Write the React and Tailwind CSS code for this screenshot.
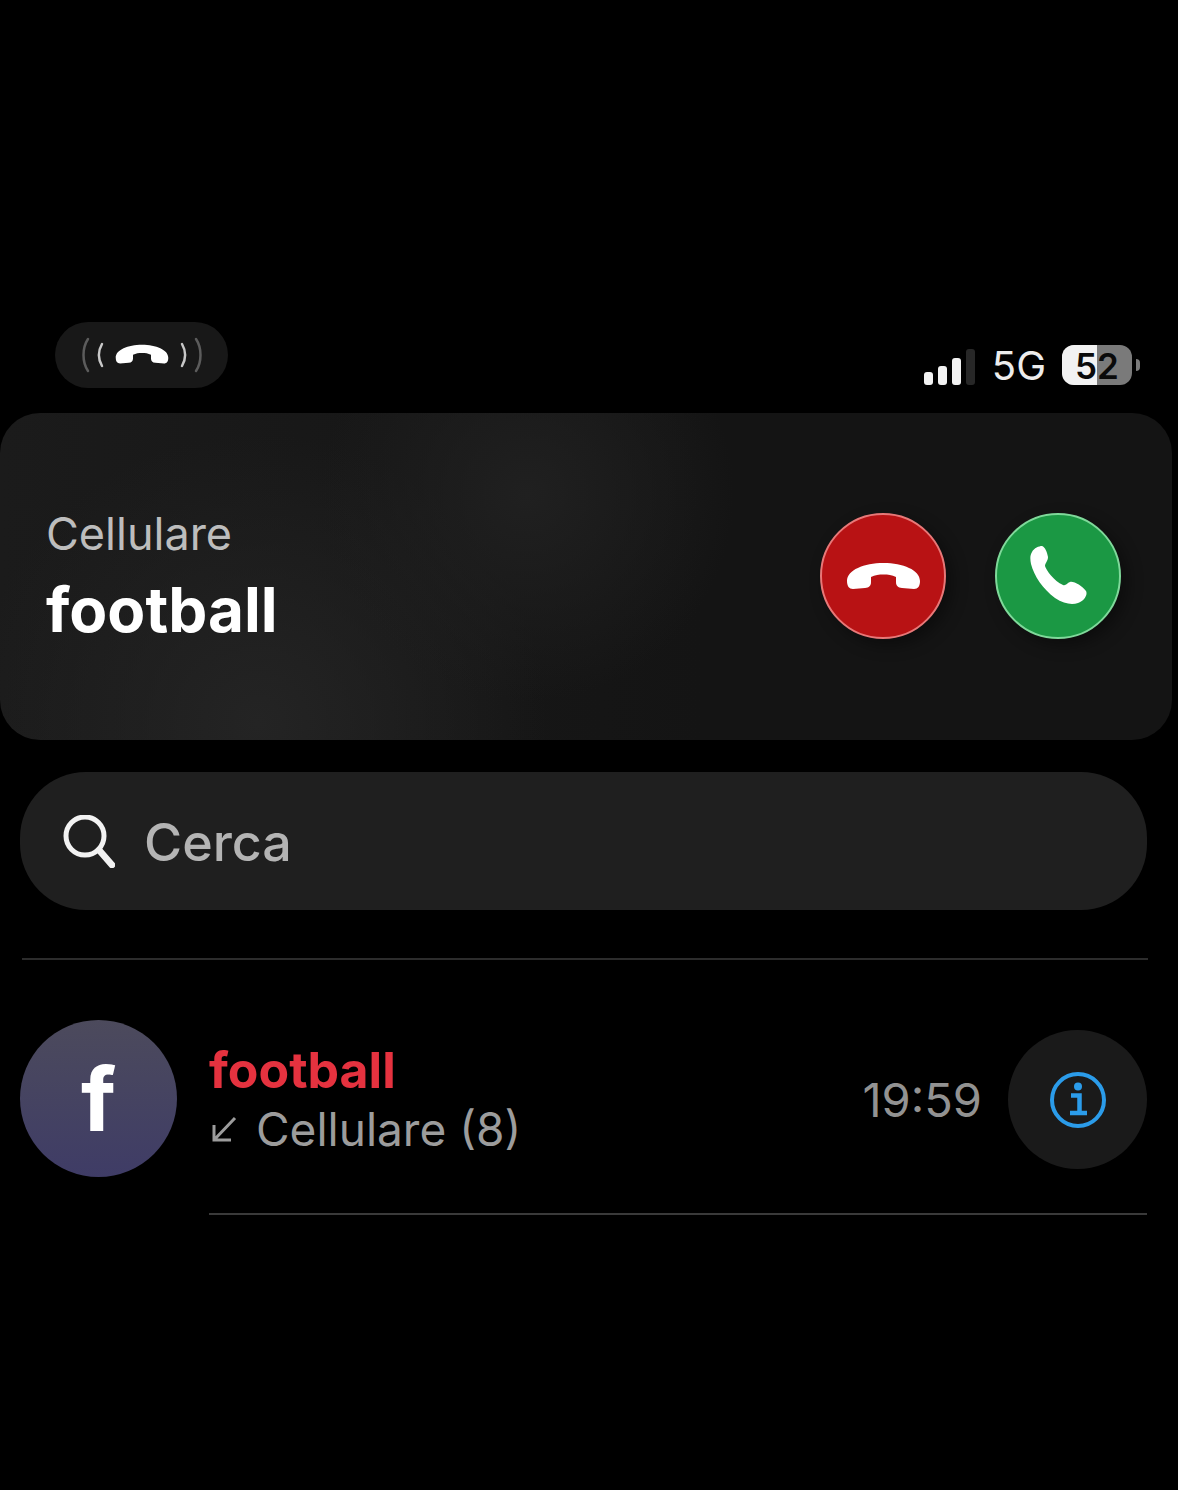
const HangupIcon = ({ className }) => (
    <svg viewBox="0 0 75 28" className={className} fill="currentColor">
        <path d="M1 19C1 8 18 1 37.5 1C57 1 74 8 74 19C74 24 72 27 68 27L56 26C52 25.5 50 24 50 20L50 15C46 13 42 12.5 37.5 12.5C33 12.5 29 13 25 15L25 20C25 24 23 25.5 19 26L7 27C3 27 1 24 1 19Z" />
    </svg>
)

const PhoneIcon = ({ className }) => (
    <svg viewBox="0 0 57 59" className={className} fill="currentColor">
        <path d="M2 6C4 2 9 0 12 0C15 1 17 6 18 11C18 15 15 17 15 20C16 24 24 35 33 39C36 40 37 37 40 36C44 35 52 40 56 45C58 49 54 55 48 57C42 59 34 58 25 52C13 43 4 30 1 18C0 13 0 9 2 6Z" />
    </svg>
)

const RingingPill = () => (
    <div className="flex h-[66px] w-[173px] items-center justify-center rounded-full bg-[#181818]">
        <svg viewBox="0 0 122 36" className="h-[36px] w-[122px]" fill="none" strokeLinecap="round">
            <path d="M7 2C1 11 1 25 7 34" stroke="#5c5c5c" strokeWidth="2.5" />
            <path d="M21 7C17 14 17 22 21 29" stroke="#c8c8c8" strokeWidth="2.5" />
            <g transform="translate(34 7) scale(0.72)">
                <path fill="#ffffff" d="M1 19C1 8 18 1 37.5 1C57 1 74 8 74 19C74 24 72 27 68 27L56 26C52 25.5 50 24 50 20L50 15C46 13 42 12.5 37.5 12.5C33 12.5 29 13 25 15L25 20C25 24 23 25.5 19 26L7 27C3 27 1 24 1 19Z" />
            </g>
            <path d="M101 7C105 14 105 22 101 29" stroke="#c8c8c8" strokeWidth="2.5" />
            <path d="M115 2C121 11 121 25 115 34" stroke="#5c5c5c" strokeWidth="2.5" />
        </svg>
    </div>
)

const StatusIcons = () => (
    <div className="mb-[3px] flex h-[40px] items-center font-['Inter',sans-serif]">
        <div className="flex items-end gap-[5px] self-end">
            <div className="h-[13px] w-[9px] rounded-[3px] bg-[#f2f2f2]"></div>
            <div className="h-[19px] w-[9px] rounded-[3px] bg-[#f2f2f2]"></div>
            <div className="h-[27px] w-[9px] rounded-[3px] bg-[#f2f2f2]"></div>
            <div className="h-[36px] w-[9px] rounded-[3px] bg-[#272727]"></div>
        </div>
        <span className="ml-[17px] pt-[2px] text-[40px] leading-none font-normal text-[#ececec]">5G</span>
        <div className="relative ml-[16px] flex h-[40px] w-[70px] overflow-hidden rounded-[12px] bg-[#7a7a7a]">
            <div className="h-full w-[35px] bg-[#f2f2f2]"></div>
            <span className="absolute inset-0 flex items-center justify-center pt-[2px] text-[35px] leading-none font-semibold text-[#0a0a0a]">52</span>
        </div>
        <div className="ml-[4px] h-[12px] w-[4px] rounded-r-full bg-[#7a7a7a]"></div>
    </div>
)

const CallCard = () => (
    <div className="mt-[25px] mr-[6px] flex h-[327px] items-center justify-between rounded-[40px] bg-[radial-gradient(circle_at_45%_25%,#202020_0%,transparent_30%),radial-gradient(circle_at_22%_95%,#242424_0%,transparent_30%),linear-gradient(to_right,#1b1b1b,#141414_60%)] pr-[51px] pl-[46px]">
        <div className="flex flex-col">
            <span className="mb-[2px] text-[45px] leading-[50px] text-[#bdbdbd]">Cellulare</span>
            <span className="mt-[14px] text-[62px] leading-[70px] font-bold text-white">football</span>
        </div>
        <div className="mb-[2px] flex items-center gap-[49px]">
            <div className="flex h-[126px] w-[126px] items-center justify-center rounded-full border-2 border-[#e87878] bg-[#b81214] text-white shadow-[6px_6px_16px_rgba(0,0,0,0.4)]">
                <HangupIcon className="h-[28px] w-[75px]" />
            </div>
            <div className="flex h-[126px] w-[126px] items-center justify-center rounded-full border-2 border-[#7fd99a] bg-[#1b9844] text-white shadow-[6px_6px_16px_rgba(0,0,0,0.4)]">
                <PhoneIcon className="h-[59px] w-[57px]" />
            </div>
        </div>
    </div>
)

const SearchBar = () => (
    <div className="mt-[32px] mr-[31px] ml-[20px] flex h-[138px] items-center rounded-[66px] bg-[#1f1f1f] pl-[43px]">
        <svg viewBox="0 0 52 53" className="h-[53px] w-[52px]" fill="none" stroke="#f2f2f2" strokeLinecap="round">
            <circle cx="22" cy="21" r="19" strokeWidth="5" />
            <path d="M36 35L49 50" strokeWidth="6.5" />
        </svg>
        <span className="mt-[4px] ml-[29px] text-[52px] leading-none font-medium text-[#b4b4b4]">Cerca</span>
    </div>
)

const RecentRow = () => (
    <div className="mt-[60px] mr-[31px] ml-[20px] flex h-[157px] items-center">
        <div className="flex h-[157px] w-[157px] items-center justify-center rounded-full bg-gradient-to-b from-[#4c4a5c] to-[#3f3c66]">
            <span className="text-[88px] leading-none font-bold text-white">f</span>
        </div>
        <div className="ml-[32px] flex flex-1 flex-col pt-[2px]">
            <span className="mb-[2px] text-[50px] leading-[56px] font-bold text-[#e5323f]">football</span>
            <div className="flex items-center text-[#9c9c9c]">
                <svg viewBox="0 0 26 28" className="ml-[2px] h-[28px] w-[26px]" fill="none" stroke="currentColor" strokeWidth="3">
                    <path d="M24 3L3 25M3 10L3 25L20 25" />
                </svg>
                <span className="ml-[19px] text-[46px] leading-[58px]">Cellulare (8)</span>
            </div>
        </div>
        <span className="mt-[2px] text-[47px] leading-none text-[#929292]">19:59</span>
        <div className="mt-[2px] ml-[26px] flex h-[139px] w-[139px] items-center justify-center rounded-full bg-[#1a1a1a]">
            <svg viewBox="0 0 56 56" className="h-[56px] w-[56px]" fill="none" stroke="#2b9cea">
                <circle cx="28" cy="28" r="26" strokeWidth="4" />
                <circle cx="28" cy="14.5" r="4" fill="#2b9cea" stroke="none" />
                <path d="M21 23.5H29.5V41M20 41H37" strokeWidth="4.5" />
            </svg>
        </div>
    </div>
)

const App = () => {
    return (
        <div className="min-h-[1490px] bg-black pt-[322px] font-['Inter',sans-serif]">

            <div className="flex items-end justify-between pr-[38px] pl-[55px]">
                <RingingPill />
                <StatusIcons />
            </div>

            <CallCard />
            <SearchBar />

            <div className="mt-[48px] mr-[30px] ml-[22px] h-[2px] bg-[#2c2c2c]"></div>

            <RecentRow />

            <div className="mt-[36px] mr-[31px] ml-[209px] h-[2px] bg-[#3a3a3a]"></div>

        </div>
    )
}

export default App
